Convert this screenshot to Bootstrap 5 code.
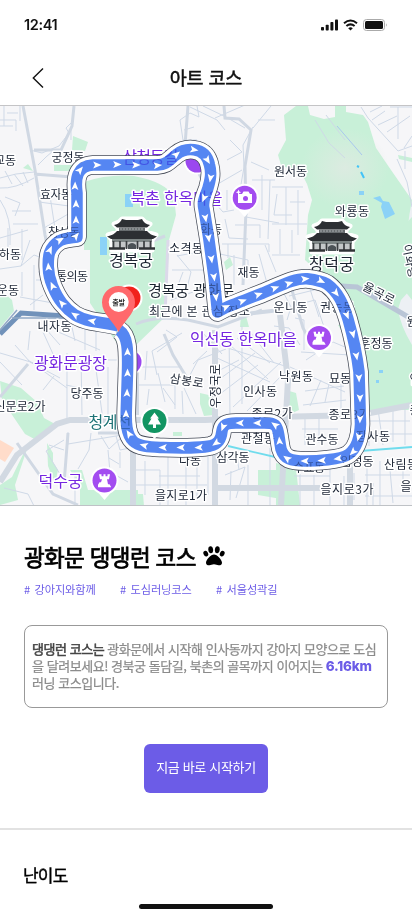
<!DOCTYPE html>
<html lang="ko">
<head>
<meta charset="utf-8">
<meta name="viewport" content="width=device-width, initial-scale=1">
<title>아트 코스</title>
<link href="https://cdn.jsdelivr.net/npm/bootstrap@5.3.0/dist/css/bootstrap.min.css" rel="stylesheet">
<style>
body{font-family:"Noto Sans CJK KR",sans-serif;color:#111;background:#fff;height:917px;overflow:hidden}
.status-bar{height:50px;padding:0 24px}
.clock{font:600 14.5px/50px Inter,sans-serif;letter-spacing:-.35px}
.title-bar{height:55px;padding:0 31px}
.title-bar h1{font-size:18.5px;font-weight:400;-webkit-text-stroke:.55px #111;letter-spacing:-.15px;line-height:26px;padding-bottom:2px}
.course-map{height:401px;border-top:1px solid #c4c4c6;border-bottom:1px solid #bfc2c6;overflow:hidden}
.course-head{padding:35px 24px 0}
.course-head h2{font-size:22.5px;line-height:30px;font-weight:400;-webkit-text-stroke:.75px #000;letter-spacing:-.65px;color:#000}
.paw{margin-left:7px}
.tag-row{margin-top:10px;font-size:11.2px;line-height:16px;letter-spacing:-.12px;color:#6c5ce7}
.tag-row span{width:96px;word-spacing:1.5px}
.about{margin:28px 24px 0;padding:14px 7px 0;height:83px;border:1px solid #999;border-radius:8px;font-size:13px;line-height:17px;letter-spacing:-.46px;color:#8c8c8c;-webkit-text-stroke:.25px #8c8c8c;white-space:nowrap}
.about b{color:#444;font-weight:400;-webkit-text-stroke:.5px #444}
.about .dist{font-family:Inter,sans-serif;font-size:13.4px;line-height:1;color:#6c5ce7;-webkit-text-stroke:0;font-weight:800;letter-spacing:-.15px}
.start-btn{width:124px;height:49px;background:#6c5ce7!important;border:0;border-radius:6px;color:#fff!important;font-size:13px;letter-spacing:-.33px;padding:0 0 3px;margin-top:36px}
.section-line{height:2px;background:#e2e2e2;margin-top:35px}
.level{font-size:17px;font-weight:400;-webkit-text-stroke:.4px #000;line-height:24px;letter-spacing:-.8px;margin:33px 24px 0 23px;color:#000}
.home-bar{width:134px;height:5px;border-radius:3px;background:#111;margin-top:17px}
.lb text{font-size:12px;fill:#1d2636;stroke:#fff;stroke-width:3px;paint-order:stroke;stroke-linejoin:round;text-anchor:middle}
.lb .poi{font-size:16px;fill:#7526e0}
.lb .spot{font-size:16px;fill:#1b2430}
.lb .water{font-size:16px;fill:#1e7376}
</style>
<script src="https://cdn.jsdelivr.net/npm/bootstrap@5.3.0/dist/js/bootstrap.bundle.min.js"></script>
</head>
<body>
<header>
  <div class="status-bar d-flex justify-content-between align-items-center">
    <span class="clock">12:41</span>
    <svg width="68" height="14" viewBox="320 18 68 14" fill="#111">
      <rect x="321" y="27" width="3" height="3.5" rx=".8"/><rect x="325.7" y="24.7" width="3" height="5.8" rx=".8"/><rect x="330.4" y="22" width="3" height="8.5" rx=".8"/><rect x="335" y="19.5" width="3" height="11" rx=".8"/>
      <g fill="none" stroke="#111" stroke-width="2"><path d="M344 23.2q6.500-5.500 13 0"/><path d="M346.400 26.100q4.100-3.500 8.200 0"/></g><path d="M348.200 28.200q2.300-1.700 4.600 0l-2.300 2.400z"/>
      <rect x="363.500" y="19.500" width="21" height="11" rx="3" fill="none" stroke="#aaa"/><rect x="365" y="21" width="18" height="8" rx="1.500"/><path d="M386 23.300q1.800 1.700 0 3.400z" fill="#aaa"/>
    </svg>
  </div>
  <div class="title-bar d-flex align-items-center justify-content-between">
    <svg width="14" height="22" viewBox="0 0 14 22" fill="none" stroke="#111" stroke-width="1.400"><path d="M12 1.500L2.300 11L12 20.500"/></svg>
    <h1 class="mb-0">아트 코스</h1><span style="width:14px"></span>
  </div>
</header>
<main>
<div class="course-map">
<svg class="d-block" width="412" height="399" viewBox="0 106 412 399">
<defs>
  <path id="route" d="M118.500 326C108 323 101 323 91 321C82 319 80 318 75 315C69 311 66 308 62 303C57 297 55 292 52.500 286C50 280 48.500 274 48.300 267C48 257 48 248 60 240.500C66 238 70 238 77 237V193C75 178 77 166 93 165H157C168 164 168 161 176.500 154.500C182 150 188 149 194 149.800C204 151 208 158 209.500 165C212 174 210 181 208 188C205 197 202 201 204 209L208.700 238L214 277L217.500 312L226 307.500C240 302 252 297 263 293C282 285 295 278 307 278.700C318 280 322 281 327 284C338 292 343 303 348 319C354 340 357 355 359 372L360.500 424C360 438 357 448 349 454C341 460 315 461 305 461C291 461 284 459 281 449C279 439 279 432 277 428C275 423 270 423 264 423H236C226 423 223 425 222 431C221 440 218 444 210 446C200 448 175 448 163 447.500C151 447 139 447 133 441C126 434 126 422 126.300 410L127.500 372C128 350 128 336 119 330"/>
  <path id="arr" d="M4.600 0L-3.800-3.500L-2 0L-3.800 3.500z"/>
  <mask id="blueOnly"><use href="#route" fill="none" stroke="#fff" stroke-width="11.500"/></mask>
  <radialGradient id="hill"><stop offset="0" stop-color="#dcebe1"/><stop offset="1" stop-color="#dcebe1" stop-opacity="0"/></radialGradient>
  <g id="rook"><path d="M0 19.500L-9 9H9z" fill="#fff"/><circle r="14" fill="#fff"/><circle r="12" fill="#a34cf0"/><path d="M-5.500-7h2.500v2h2v-2h2v2h2v-2h2.500l-1 5h-2l1 5h1.500l1.500 2.500V6h-13V3.500L-5 1h1.500l1-3h-2z" transform="translate(0 .8)" fill="#fff"/></g>
  <g id="palace"><path d="M-18-12L-13-14L-10-17H10L13-14L18-12L14-8V-4L24-1L20 4V14H-20V4L-24-1L-14-4V-8z" fill="#fff" stroke="#fff" stroke-width="5" stroke-linejoin="round"/>
    <path d="M-18-11Q-12-12-10-17L-6-16H6L10-17Q12-12 18-11L15-8.500H-15z" fill="#2c2f33"/><path d="M-13-8.500H13V-4H-13z" fill="#686d70"/><path d="M-12-7H12" stroke="#a7adaf" stroke-dasharray="2 1"/><path d="M-25 .5Q-18-1-15-5H15Q18-1 25 .5L21 3H-21z" fill="#2c2f33"/><path d="M-20 3H20V6H-20z" fill="#7d8585"/><path d="M-20 6H20V12H-20z" fill="#c4c7c8"/><path d="M-18.500 5V13M-12 5V13M-5.500 5V13M5.500 5V13M12 5V13M18.500 5V13" stroke="#3a3d40" stroke-width="1.700"/><path d="M-23 12.500H-7M7 12.500H23" stroke="#303336" stroke-width="2.500"/><path d="M-4 13V9Q0 5 4 9V13z" fill="#4b5155"/></g>
</defs>
<rect y="106" width="412" height="400" fill="#f6f6f8"/>
<g fill="#c8f0d8">
  <path d="M73 136L88 142L85 151L72 150zM54 165H72V171H54zM23 168L28 164L33 171zM84 182Q108 174 134 176Q166 182 174 197L176 215L169 240L166 316L136 345H118L90 303V250H84zM0 290L12 300L14 311L0 328z"/>
  <path d="M284 115L296 106H308L310 115L324 119L335 117V106H346V112L363 115L368 122L376 148L391 170L407 193L412 200V405L371 411L354 330Q347 295 328 281L305 260L308 215L312 200L307 184L302 174L281 165L278 155L286 140zM398 155L412 158V162L399 159z"/>
  <path d="M0 381L21 388L37 402L44 418L55 424L38 441L25 434L2 400zM47 443L53 453V462L58 470L55 484L48 466zM70 470H82L88 490H138V506H80V485zM200 393L213 396V415L204 416L200 404zM173 432H182V436H173zM136 494H143L144 506H136zM224 262L230 257L233 265L226 270zM241 316H246L249 327H240zM286 390L296 393L299 410L288 415zM338 325L355 322L350 345zM363 410H412V404H363zM258 470H286L287 500L258 495zM276 463L296 468L300 505H276zM30 440L12 477L0 485V505L18 500L15 485z"/>
</g>
<ellipse cx="345" cy="168" rx="44" ry="40" fill="url(#hill)"/>
<path d="M398 309Q400 325 412 345V200Q402 250 410 290L401 300z" fill="#edf0f4"/><path d="M400 230L412 217V300L404 290z" fill="#c8f0d8"/><path d="M0 440L14 448L5 462L0 459z" fill="#ffdcca"/>
<g fill="#8bd2f7"><path d="M373 198L380 196L383 201L389 202L395 214L385 219L381 207L382 203zM359 191h5v4h-5zM125 194h8v13h-8zM100 237h7v18h-7zM379 370h4v3h-4zM376 380h3v3h-3z"/></g><path d="M357 166l2 1M361 172l3 6" stroke="#43c3f7" stroke-width="2"/>
<!-- minor streets -->
<g fill="none" stroke="#cfd9e7" stroke-width="1">
<path d="M0 120H16V131M4 106V126M0 126H13M20 106V121M7 113H18M30 150L42 153L59 146L69 133L66 128L73 121M38 165L46 157L53 151M71 130V140M0 178L16 174L34 172M5 171L12 184M14 174L23 186M23 172L28 183M0 188Q15 189 34 178M0 200Q12 217 10 245M5 197L20 203L15 216M12 211H31M13 224H38M39 202L69 206M44 228L70 213M50 196L56 235M8 228V247M0 238L28 230M22 229V260M0 269L21 266L30 240M21 266L34 255L45 259M22 272V296M34 265V310M36 280H48M38 272L52 270M20 297L64 305M30 305L43 295M45 328L60 345M15 345L30 362L60 378M30 331L28 350M43 332L53 354M56 331L100 350M70 318L75 341M85 321V350M96 325V351M0 353L34 363M0 362L22 385M28 360L67 388M54 376L43 390M67 353V420M81 355L82 415M94 355L103 420M74 360H120M66 385L103 393M108 367L108 420"/>
<path d="M197 106L199 117L190 113L180 120L183 140H197M190 107L217 120L225 130M203 106L226 117L245 128M215 118L245 105M253 127L243 145L244 167L239 196M230 140L242 152L227 160M242 170L216 185M227 190V210M214 202L223 212L234 210M271 106L253 128M258 120H275M194 127L184 130M251 162L269 170M247 190V215M252 180H275M262 175V210M270 180L268 239M246 217L279 223M235 225H260V238M225 219L229 238L248 239M222 244H269V252M220 254L248 260V270M228 244V258M234 255V285M259 254L268 287M265 245L276 272M286 187V225M272 187H303M277 194L274 215H292M298 190V235M290 202H305M272 224H307M272 255H300M280 229V254M292 230V253M315 120L329 143L345 158M326 115L345 140M361 107L368 118L398 151L412 146M370 112L382 106M372 120L385 111M378 125L397 116M387 132L410 116M398 139V107M390 107H412M397 159L407 182L412 207M404 148L412 136M405 151V169"/>
<path d="M177 255L191 272L184 300M172 270H207M177 256L204 251M183 272L175 293M171 300L193 292M182 333L152 351L157 375M166 330L177 337L157 352M147 351L145 380M137 367H182M139 385H175V409M149 389L147 405M158 373L165 402M163 388L175 405M182 391L183 414M184 388L196 414M190 375L198 360L226 349M193 364L207 351M202 332L222 354M242 326V404M229 331L230 416M215 344L288 367M217 358L270 382M230 345L268 379M237 338L270 363M250 332L274 363M220 370L239 360M217 381L255 353M220 394L258 365M233 407L281 362M247 411L285 372M280 286L291 307L287 320M289 296L302 293L326 287M300 304L315 300L326 333M310 289L319 317M328 289L335 313M274 326L289 328L300 345M295 318L304 320L304 350M301 352L350 355M306 360L333 342L352 350M290 367L345 392M305 391L344 386M303 405L346 400M321 380L310 406M331 375L325 402M341 374V417M305 418V445M319 418V443M302 429H338M369 411V446M378 409L383 445M393 409V442M405 407V445M370 421H410M364 434H412M367 460V505M380 461V505M390 470L393 503M403 460V481"/>
<path d="M64 440L46 451L66 484M49 445L64 450M68 432V444L128 434M91 433L89 450L78 469M101 436L109 449L123 436M108 450L110 472L128 482M116 436L120 450L130 448M109 458L119 464M120 452V468M75 471V503M4 488L28 494L34 506M136 470H160V506M145 461V495M168 456V506M186 465V506M197 456V498M208 454V495M136 485H207M159 476H200M225 475L245 467L236 498M218 464L237 456L239 470M231 471L230 500M248 465V505M270 448V505M223 487H254M258 486H281M282 467V503M294 476H330M300 474V505M314 475V505M330 464V505M344 476V505M354 473V500M300 489H318M365 475H410M365 496H412M373 483V505"/>
</g>
<path d="M337 126L362 155" fill="none" stroke="#a9c7ee"/>
<!-- main roads -->
<g fill="none" stroke="#d0d8e3" stroke-width="3">
<path d="M23 106L35 170L45 235L50 259M34 150H61L72 126L74 106M34 174L72 177M188 106L185 145L214 204M224 106L225 118L239 119L251 130L245 166L246 210L243 285M165 236L136 248M136 324Q156 315 188 320L218 327L262 310M164 334L173 355L187 378M289 280L303 328L314 349M0 397L28 364M98 433H125M17 443L53 494L78 505M68 433L64 484"/></g>
<g fill="none" stroke="#d2d9e2" stroke-width="6"><path d="M0 482L17 455L57 424L70 420H205L273 417L360 415L412 405M215 330V505M133 450V506M280 315L288 380L281 505M350 450V505M136 355V415M215 488H320"/></g>
<path d="M168 240L165 316" fill="none" stroke="#dcd9ea" stroke-width="3"/>
<g fill="none" stroke="#b9c5d6" stroke-width="5"><path d="M60 316L113 324M325 285L357 287L410 318"/></g><path d="M218 317L280 310" fill="none" stroke="#d0d8e3" stroke-width="4"/><path d="M0 334L21 313L65 316L78 320" fill="none" stroke="#7192ba" stroke-width="5"/><path d="M0 330L17 310M12 318H65" fill="none" stroke="#91a9c5" stroke-width="1.500"/>
<path d="M228 446L275 457L360 451L412 447" fill="none" stroke="#70dced" stroke-width="1.800"/>
<g fill="#fff"><circle cx="197" cy="161" r="13.500"/><circle cx="130" cy="362" r="13.500"/></g><g fill="#9b48ef"><circle cx="197" cy="161" r="11.500"/><circle cx="130" cy="362" r="11.500"/></g>
<circle cx="129" cy="298" r="13.500" fill="#fff"/><circle cx="129" cy="298" r="11.500" fill="#f1211c"/>
<g id="labels" class="lb">
<text x="68" y="161.500" textLength="33">궁정동</text><text x="5" y="165" textLength="22">교동</text><text x="56" y="198.500" textLength="32">효자동</text><text x="64" y="236.500" textLength="32">창성동</text><text x="10" y="259" textLength="22">하동</text><text x="8" y="295" textLength="22">운동</text><text x="72" y="281" textLength="32">통의동</text><text x="54.500" y="331" textLength="34">내자동</text><text x="87" y="398" textLength="33">당주동</text><text x="20" y="411" textLength="51">신문로2가</text><text x="290.500" y="175.500" textLength="33">원서동</text><text x="352" y="215.500" textLength="34">와룡동</text><text x="186" y="253" textLength="34">소격동</text><text x="211" y="234" textLength="22">화동</text><text x="248.500" y="277" textLength="22">재동</text><text x="290.500" y="312" textLength="34">운니동</text><text x="337" y="312" textLength="34">권농동</text><text x="376" y="347.500" textLength="33">훈정동</text><text x="296" y="380.500" textLength="34">낙원동</text><text x="340" y="383" textLength="22">묘동</text><text x="260" y="395.500" textLength="34">인사동</text><text x="272" y="418" textLength="41">종로2가</text><text x="349" y="419" textLength="41">종로3가</text><text x="258" y="442.500" textLength="34">관철동</text><text x="322" y="443.500" textLength="33">관수동</text><text x="373" y="440.500" textLength="34">장사동</text><text x="233" y="461.500" textLength="33">삼각동</text><text x="190" y="465" textLength="22">다동</text><text x="181" y="499.500" textLength="52">을지로1가</text><text x="347" y="493.500" textLength="53">을지로3가</text><text x="309" y="472" textLength="32">수표동</text><text x="357" y="466" textLength="33">입정동</text><text x="401" y="468.500" textLength="34">산림동</text><text x="406" y="491">을</text><text x="412" y="326">원</text><text x="415" y="384">연</text><text x="415" y="415">종</text>
<text transform="translate(377 297) rotate(27)" textLength="34">율곡로</text><text transform="translate(186 385) rotate(9)" textLength="34">삼봉로</text><text transform="translate(219.500 386) rotate(-90)" textLength="44">우정국로</text><text transform="translate(406 262) rotate(78)" textLength="34">이화동</text>
<text class="poi" x="150.500" y="162.500" textLength="56">삼청동길</text><text class="poi" x="176.500" y="204" textLength="92">북촌 한옥마을</text><text class="poi" x="243.500" y="345" textLength="107">익선동 한옥마을</text><text class="poi" x="70.500" y="368.500" textLength="73">광화문광장</text><text class="poi" x="60.500" y="487" textLength="44">덕수궁</text><text class="water" x="110" y="427.500" textLength="43">청계천</text>
<text class="spot" x="131" y="266" textLength="44">경복궁</text><text class="spot" x="331.500" y="269.500" textLength="45">창덕궁</text><text class="spot" style="font-size:15px" x="191" y="296" textLength="86">경복궁 광화문</text><text x="199.500" y="315.500" textLength="101">최근에 본 관심 장소</text>
</g>
<g fill="none" stroke-linejoin="round"><use href="#route" stroke="#454b58" stroke-width="19.500"/><use href="#route" stroke="#fff" stroke-width="18"/><use href="#route" stroke="#5586f2" stroke-width="11.500"/></g>
<use href="#labels" mask="url(#blueOnly)" opacity=".45" style="mix-blend-mode:multiply"/>
<g id="arrows" fill="#fff"></g>
<use href="#palace" x="132" y="236"/><use href="#palace" x="332" y="238"/>
<path d="M244.700 217L235 206H254z" fill="#fff"/><circle cx="244.700" cy="197.700" r="14" fill="#fff"/><circle cx="244.700" cy="197.700" r="12" fill="#a34cf0"/><path d="M238 194h4l1.500-2.500h5L250 194h2v9h-14z" fill="#fff"/><circle cx="245.500" cy="198.500" r="2.500" fill="#a34cf0"/><path d="M238.500 189.500l.8 1.900 1.900.8-1.900.8-.8 1.900-.8-1.900-1.900-.8 1.900-.8z" fill="#fff"/>
<use href="#rook" x="319" y="338"/><use href="#rook" x="104.500" y="480.500"/>
<path d="M154.500 439L147 431H162z" fill="#fff"/><circle cx="154.500" cy="421" r="14" fill="#fff"/><circle cx="154.500" cy="421" r="12" fill="#129562"/><path d="M154.500 412.500L159 418.500H157.500L161 424.500H156V428H153V424.500H148L151.500 418.500H150z" fill="#fff"/>
<path d="M122 434C126 443 136 447.300 146 447.300H170" fill="none"/>
<path d="M118.500 332C114 322 102 314 102 302.500A16.500 16.500 0 0 1 135 302.500C135 314 123 322 118.500 332z" fill="#ff696c"/><circle cx="118.700" cy="302" r="10" fill="#fff"/><text x="118.700" y="304.700" font-size="7.200" font-weight="700" text-anchor="middle" fill="#333" textLength="13">출발</text>
</svg></div>
<section class="course-head">
  <div class="d-flex align-items-center"><h2 class="mb-0">광화문 댕댕런 코스</h2>
  <svg class="paw" width="22" height="20" viewBox="0 0 22 20"><g fill="#000"><ellipse cx="2.800" cy="7.600" rx="2.300" ry="3" transform="rotate(-25 2.800 7.600)"/><ellipse cx="7.700" cy="3.700" rx="2.400" ry="3.500" transform="rotate(-8 7.700 3.700)"/><ellipse cx="14.300" cy="3.700" rx="2.400" ry="3.500" transform="rotate(8 14.300 3.700)"/><ellipse cx="19.200" cy="7.600" rx="2.300" ry="3" transform="rotate(25 19.200 7.600)"/><path d="M11 8.500C8 8.500 3 13.800 3 16.700C3 19 5 19.400 6.500 19.200C8 19 9 18.200 11 18.200C13 18.200 14 19 15.500 19.200C17 19.400 19 19 19 16.700C19 13.800 14 8.500 11 8.500z"/></g></svg></div>
  <div class="tag-row d-flex"><span># 강아지와함께</span><span># 도심러닝코스</span><span># 서울성곽길</span></div>
</section>
<p class="about mb-0"><b>댕댕런 코스는</b> 광화문에서 시작해 인사동까지 강아지 모양으로 도심<br>을 달려보세요! 경북궁 돌담길, 북촌의 골목까지 이어지는 <span class="dist">6.16km</span><br>러닝 코스입니다.</p>
<div class="text-center d-flex justify-content-center"><button class="btn start-btn">지금 바로 시작하기</button></div>
<div class="section-line"></div>
<h3 class="level">난이도</h3>
</main>
<div class="home-bar mx-auto"></div>
<script>
// direction arrows along the course: x, y, heading in degrees
const stops=[[92,321,192],[75,315,212],[62,303.500,228],[52.500,286,246],[48.500,267,265],[50,250,295],[60,240,330],[76,236,-50],[76,220,-90],[76,204,-90],[75,186,-88],[80,170,-50],[97,165,0],[117,164.500,0],[136,165,0],[157.500,165.500,-5],[176.500,154.500,-40],[194,149.800,10],[207.500,160,58],[210.500,178,100],[204,198,112],[205.500,218,80],[208.700,238,82],[211.500,259,82],[214,277,82],[216,297,84],[226,307,-25],[242.500,301,-20],[258.500,294.500,-20],[275,288,-20],[289,283.500,-18],[305,279,-5],[321,281,25],[336,293,52],[347,315,68],[353,334,76],[356.500,356,80],[359,378,88],[360,398,90],[360,419,92],[358.500,437,102],[353,452,135],[338,458.500,172],[322,460.500,178],[305,461,180],[287,458.500,215],[279.500,441,265],[275,425,215],[257.500,423,180],[240,423,180],[223,427,110],[216,443,145],[199,447.500,178],[181,447.500,180],[163,447.500,180],[144,445.500,195],[129,434,238],[126,414,-90],[127,393,-88],[127.500,373,-90],[127.500,352,-90]];
document.getElementById('arrows').innerHTML=stops.map(([x,y,a])=>`<use href="#arr" transform="translate(${x} ${y}) rotate(${a})"/>`).join('');
</script>
</body>
</html>
